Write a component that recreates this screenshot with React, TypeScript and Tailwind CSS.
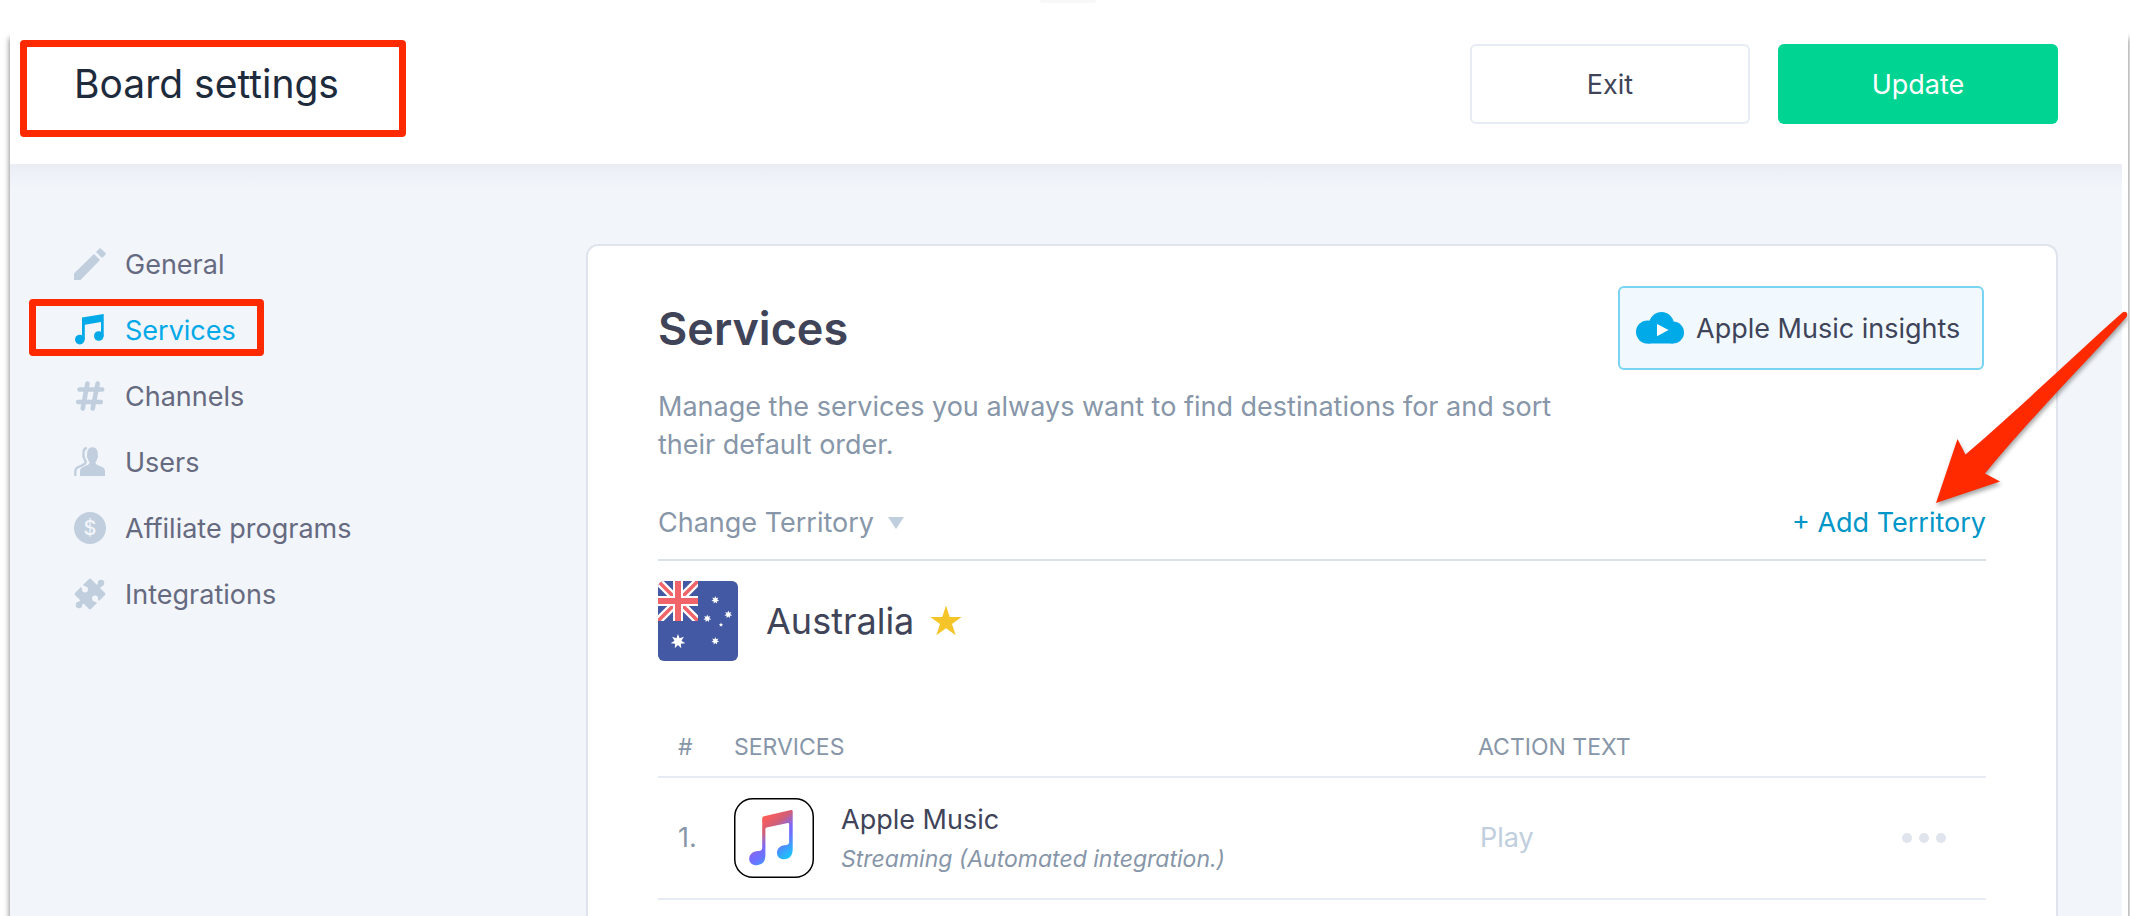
import type { ReactNode } from "react";

const starPoints = (cx: number, cy: number, r: number, spikes: number, inner: number) =>
  Array.from({ length: spikes * 2 }, (_, i) => {
    const radius = i % 2 === 0 ? r : r * inner;
    const angle = (Math.PI / spikes) * i - Math.PI / 2;
    return `${cx + radius * Math.cos(angle)},${cy + radius * Math.sin(angle)}`;
  }).join(" ");

const PencilIcon = () => (
  <svg viewBox="0 0 32 32" className="size-8" fill="currentColor" aria-hidden="true">
    <path d="M0 32v-6.500L20 6l6 6L6.500 32z" />
    <path d="M22 4l3.200-3.300q.9-.9 1.800 0L31.400 5q.9.900 0 1.800L28 10z" />
  </svg>
);

const NoteIcon = () => (
  <svg viewBox="0 0 32 32" className="size-8" fill="currentColor" aria-hidden="true">
    <path d="M8 3.500 29.700 0v22.500H27V8l-16.200 2.800v15H8z" />
    <circle cx="5.800" cy="25.600" r="4.800" />
    <circle cx="24.800" cy="22" r="4.800" />
  </svg>
);

const HashIcon = () => (
  <svg viewBox="0 0 32 32" className="size-8" fill="none" stroke="currentColor" strokeWidth="4.600" strokeLinecap="round" aria-hidden="true">
    <path d="M13.500 3.500 8.700 28.500M23.700 3.500 18.700 28.500M5.500 9.500h22.700M4.200 22h22.600" />
  </svg>
);

const UsersIcon = () => (
  <svg viewBox="0 0 32 32" className="size-8" fill="currentColor" aria-hidden="true">
    <path d="M6 30v-4.500c0-3 1.500-4 4-5l3.500-1.500c1.500-.7 2-1.300 2-3-1-1-1.500-2.200-1.800-3.800-.9-.8-1.100-2.200-.5-3.200C12.800 4.500 14.700 1.300 18.500 1.300S24.200 4.500 23.700 9c.6 1 .4 2.400-.4 3.200-.3 1.600-.8 2.800-1.800 3.800 0 1.700.5 2.300 2 3L27 20.500c2.500 1 4 2 4 5V30z" />
    <path d="M12.800 2C10 2.500 9.200 5 9.500 8.500c-.4 1.500 0 3 .9 4 .2 1.200.6 2 1.400 3.200 0 2-1.300 2.600-4.300 3.900C3.500 21.200 1.300 22 1.300 25.500V30" fill="none" stroke="currentColor" strokeWidth="2.300" />
  </svg>
);

const DollarIcon = () => (
  <svg viewBox="0 0 32 32" className="size-8" fill="currentColor" aria-hidden="true">
    <circle cx="16" cy="16" r="16" />
    <text x="16" y="23" textAnchor="middle" fontSize="20" fontWeight="500" fill="#f2f5fa">
      $
    </text>
  </svg>
);

const PuzzleIcon = () => (
  <svg viewBox="0 0 32 32" className="size-8" fill="currentColor" aria-hidden="true">
    <path d="M1 15 15 1q1-1 2 0L31 15q1 1 0 2L17 31q-1 1-2 0L1 17q-1-1 0-2z" />
    <path d="M20 6.500q3 2 4-1.500l4 3.500q-3 1-1.500 4zM6 19l6 7q-3.500-1.500-4.500 2l-3.500-4q3.500-1 2-5z" />
    <circle cx="27" cy="5" r="3.200" />
    <circle cx="5" cy="27" r="3.200" />
    <g fill="#f2f5fa">
      <circle cx="11" cy="11.500" r="3" />
      <circle cx="21" cy="20.500" r="3" />
      <path d="M6.500 8.500 8.500 6.500q1.500 1.600 3 2l-3 3.500q-.5-2-2-3.500zM25.500 23.500l-2 2q-1.500-2-3.500-2.200l3.500-3.300q.5 2 2 3.500z" />
    </g>
  </svg>
);

const CloudPlayIcon = () => (
  <svg viewBox="0 0 48 32" className="h-8 w-12 shrink-0" aria-hidden="true">
    <g fill="#00a9e8">
      <circle cx="11.500" cy="20" r="11.500" />
      <circle cx="25.500" cy="12.500" r="12.500" />
      <circle cx="37" cy="20.500" r="11" />
      <path d="M11.500 16h25.500v15.500H11.500z" />
    </g>
    <path d="M21 12l11.500 6L21 24.200z" fill="#fff" />
  </svg>
);

const AppleMusicLogo = () => (
  <svg viewBox="0 0 80 80" className="size-20 shrink-0" role="img" aria-label="Apple Music">
    <defs>
      <linearGradient id="note" gradientUnits="userSpaceOnUse" x1="25" y1="14" x2="62" y2="62">
        <stop offset="0" stopColor="#ff5b50" />
        <stop offset="0.140" stopColor="#fb5c5a" />
        <stop offset="0.320" stopColor="#d05f78" />
        <stop offset="0.420" stopColor="#a066c4" />
        <stop offset="0.510" stopColor="#7b69fb" />
        <stop offset="0.620" stopColor="#6a74ff" />
        <stop offset="0.760" stopColor="#38a2ff" />
        <stop offset="0.900" stopColor="#1bc6ff" />
      </linearGradient>
    </defs>
    <rect x="0.750" y="0.750" width="78.500" height="78.500" rx="18" fill="#fff" stroke="#000" strokeWidth="1.500" />
    <path
      fill="url(#note)"
      d="M28.200 20.500q0-1.800 1.800-2.300L57 12q1.700-.4 1.700 1.300V51c0 6.500-3 10.300-8.700 10.300-4.300 0-7-2.800-7-6.300 0-4.500 3-7 7.500-7.700 3-.5 4.600-.8 4.600-3V26q0-1.300-1.300-1L32.600 29.500q-1.200.3-1.200 1.500V57c0 6.500-3 10.200-8.900 10.200-4.300 0-7.300-2.700-7.300-6.300 0-4.500 3-7 7.500-7.700 3.500-.5 5.500-.7 5.500-3z"
    />
  </svg>
);

const AustraliaFlag = () => (
  <svg viewBox="0 0 80 80" className="size-20 shrink-0 rounded-md" role="img" aria-label="Flag of Australia">
    <path d="M0 0h80v80H0z" fill="#4459a4" />
    <svg width="40" height="40" viewBox="0 0 40 40">
      <path d="M0 0 40 40M40 0 0 40" stroke="#fff" strokeWidth="8" />
      <path d="M0 0 40 40M40 0 0 40" stroke="#f0646a" strokeWidth="3.500" />
      <path d="M20 0v40M0 20h40" stroke="#fff" strokeWidth="10" />
      <path d="M20 0v40M0 20h40" stroke="#f0646a" strokeWidth="6" />
    </svg>
    <g fill="#fff">
      <polygon points={starPoints(20, 60.500, 7.500, 7, 0.480)} />
      <polygon points={starPoints(57.300, 19, 4, 7, 0.500)} />
      <polygon points={starPoints(49.300, 37.500, 4, 7, 0.500)} />
      <polygon points={starPoints(70.300, 33.500, 4, 7, 0.500)} />
      <polygon points={starPoints(57.300, 60, 4, 7, 0.500)} />
      <polygon points={starPoints(63, 43.800, 2.300, 5, 0.450)} />
    </g>
  </svg>
);

// Hand-drawn style pointer with a long tapering tail
const PointerArrow = () => (
  <svg viewBox="0 0 196 204" className="pointer-events-none absolute -right-[142px] bottom-8 z-20 h-[204px] w-[196px]" aria-hidden="true">
    <path
      d="M4 196 25.500 132l8 15.500C88 101 135 55 190.500 5.500q2.500-1.500 4 0 1.500 2 0 4.500C145 65 95 115 53 166.500l15 8z"
      fill="#ff2a00"
      className="drop-shadow-[1px_3px_2px_rgba(0,0,0,0.35)]"
    />
  </svg>
);

const Highlight = ({ className }: { className: string }) => (
  <div className={`pointer-events-none absolute rounded border-[7px] border-[#ff2a00] ${className}`} />
);

const navItems: { label: string; icon: ReactNode; active?: boolean }[] = [
  { label: "General", icon: <PencilIcon /> },
  { label: "Services", icon: <NoteIcon />, active: true },
  { label: "Channels", icon: <HashIcon /> },
  { label: "Users", icon: <UsersIcon /> },
  { label: "Affiliate programs", icon: <DollarIcon /> },
  { label: "Integrations", icon: <PuzzleIcon /> },
];

const services = [
  { id: 1, name: "Apple Music", note: "Streaming (Automated integration.)", action: "Play", logo: <AppleMusicLogo /> },
];

export default function App() {
  return (
    <div className="relative flex min-h-screen flex-col overflow-hidden bg-white pt-[30px] pr-[2px] pl-[10px] font-['Inter',sans-serif] text-[27px] text-[#3f4459]">
      <div className="absolute top-0 left-[1040px] h-[3px] w-14 rounded-b bg-[#f8f8f8]" />

      <div className="relative flex flex-1 flex-col bg-white shadow-[0_8px_6px_rgba(0,0,0,0.55)]">
        {/* Header */}
        <header className="flex items-center justify-between pt-[14px] pr-[70px] pb-10 pl-16">
          <h1 className="text-[39px] text-[#1e2b3d]">Board settings</h1>
          <Highlight className="top-[10px] left-[10px] h-[97px] w-[386px]" />
          <div className="flex gap-7">
            <button type="button" className="h-20 w-[280px] rounded-md border-2 border-[#e6ebf4] bg-white pt-0.5">
              Exit
            </button>
            <button type="button" className="h-20 w-[280px] rounded-md bg-[#00d492] pt-0.5 text-white">
              Update
            </button>
          </div>
        </header>

        <div className="mr-[6px] flex flex-1 bg-[#f2f5fa] bg-[linear-gradient(#eaeef4_0,#edf0f7_8px,#f2f5fa_24px)] pr-16 pl-16">
          {/* Sidebar */}
          <nav className="w-[512px] shrink-0 pt-[67px]">
            <ul>
              {navItems.map((item) => (
                <li key={item.label} className="relative">
                  <a
                    href="#"
                    className={`flex h-[66px] items-center gap-[19px] ${item.active ? "text-[#00a9e8]" : "text-[#666a80]"}`}
                  >
                    <span className={item.active ? "text-[#00a9e8]" : "text-[#c0cedd]"}>{item.icon}</span>
                    <span className="pt-0.5">{item.label}</span>
                  </a>
                  {item.active && <Highlight className="top-[2px] -left-[45px] h-[57px] w-[235px]" />}
                </li>
              ))}
            </ul>
          </nav>

          {/* Content */}
          <div className="flex min-w-0 flex-1 flex-col pt-20">
            <main className="flex-1 rounded-t-xl border-2 border-b-0 border-[#dfe4ed] bg-white px-[70px] pt-10">
              <div className="flex items-start justify-between">
                <div className="pt-[13px]">
                  <h2 className="text-[45px] leading-[60px] font-semibold">Services</h2>
                  <p className="mt-[29px] max-w-[920px] leading-[38px] text-[#8796a8]">
                    Manage the services you always want to find destinations for and sort their default order.
                  </p>
                </div>
                <button
                  type="button"
                  className="mr-[2px] flex h-[84px] w-[366px] shrink-0 items-center gap-3 rounded-md border-2 border-[#79d3f2] bg-[#f1f9ff] pl-4 whitespace-nowrap"
                >
                  <CloudPlayIcon />
                  <span className="pt-0.5">Apple Music insights</span>
                </button>
              </div>

              <div className="flex items-center justify-between border-b-2 border-[#dae0ea] pt-[39px] pb-4">
                <div className="flex items-center gap-[14px]">
                  <select aria-label="Change Territory" className="h-10 appearance-none bg-transparent text-[#8796a8]">
                    <option>Change Territory</option>
                  </select>
                  <svg viewBox="0 0 16 12" className="h-3 w-4" aria-hidden="true">
                    <path d="M0 0h16L8 12z" fill="#c0cedd" />
                  </svg>
                </div>
                <div className="relative">
                  <a href="#" className="block leading-10 text-[#0096c7]">+ Add Territory</a>
                  <PointerArrow />
                </div>
              </div>

              <div className="flex items-center pt-5">
                <AustraliaFlag />
                <h3 className="ml-7 text-[36px]">Australia</h3>
                <svg viewBox="0 0 32 32" className="ml-4 size-8" role="img" aria-label="Default territory">
                  <polygon points={starPoints(16, 17, 16.500, 5, 0.382)} fill="#f4c429" />
                </svg>
              </div>

              <table className="mt-[58px] w-full table-fixed border-collapse text-left text-[#8796a8]">
                <thead>
                  <tr className="h-[58px] border-b-2 border-[#e6ebf4] text-[23px]">
                    <th scope="col" className="w-[76px] pl-5 font-normal">#</th>
                    <th scope="col" className="font-normal">SERVICES</th>
                    <th scope="col" className="w-[368px] font-normal">ACTION TEXT</th>
                    <td className="w-[140px]" />
                  </tr>
                </thead>
                <tbody>
                  {services.map((service) => (
                    <tr key={service.id} className="h-[122px] border-b-2 border-[#e6ebf4]">
                      <td className="pl-5">{service.id}.</td>
                      <td>
                        <div className="flex items-center gap-[27px]">
                          {service.logo}
                          <div className="pt-0.5">
                            <div className="leading-10 text-[#3f4459]">{service.name}</div>
                            <div className="text-[23px] leading-[38px] italic">{service.note}</div>
                          </div>
                        </div>
                      </td>
                      <td>
                        <input
                          type="text"
                          aria-label={`Action text for ${service.name}`}
                          placeholder={service.action}
                          className="w-full px-[2px] placeholder:text-[#c0cedd]"
                        />
                      </td>
                      <td className="pr-10">
                        <button type="button" aria-label="More options" className="ml-auto flex gap-[7px]">
                          <span className="size-[10px] rounded-full bg-[#dfe4ed]" />
                          <span className="size-[10px] rounded-full bg-[#dfe4ed]" />
                          <span className="size-[10px] rounded-full bg-[#dfe4ed]" />
                        </button>
                      </td>
                    </tr>
                  ))}
                </tbody>
              </table>
            </main>
          </div>
        </div>
      </div>
    </div>
  );
}
